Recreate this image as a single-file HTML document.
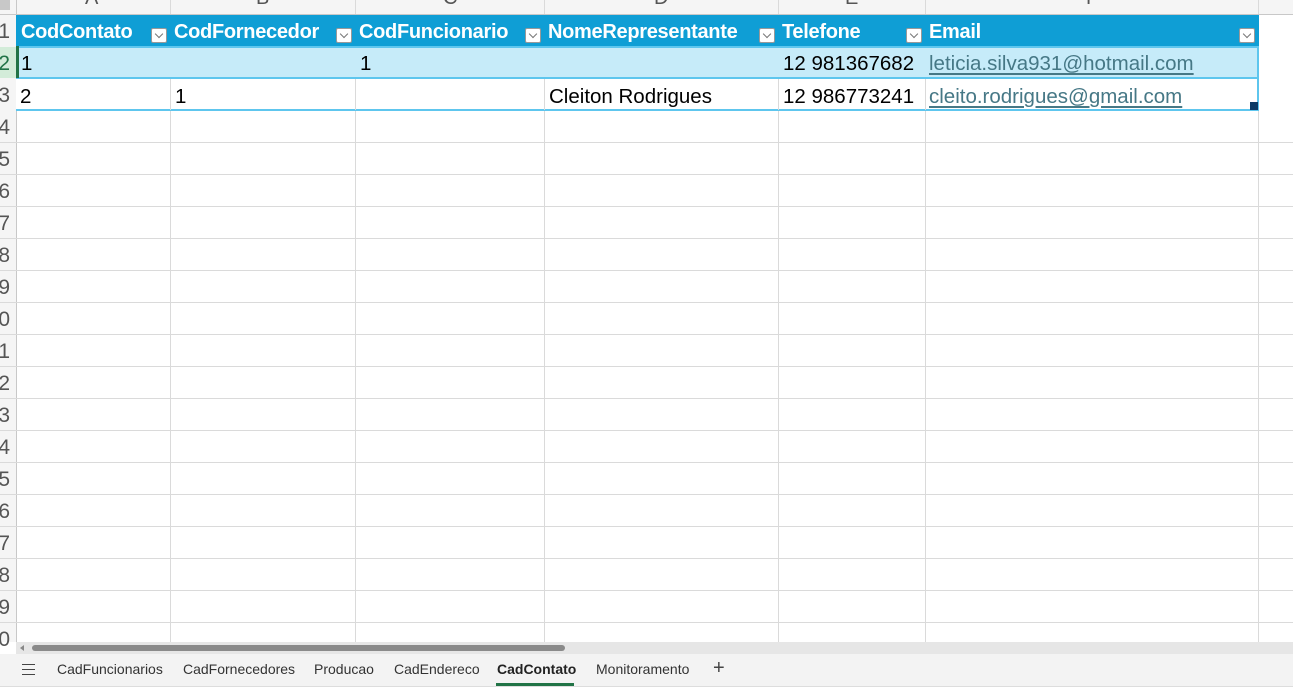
<!DOCTYPE html>
<html><head><meta charset="utf-8"><style>
*{margin:0;padding:0;box-sizing:border-box}
body{width:1293px;height:693px;overflow:hidden;background:#fff;font-family:"Liberation Sans",sans-serif;position:relative}
.a{position:absolute}
.vl{position:absolute;top:0;width:1px;background:#dadada;height:642px}
.hl{position:absolute;left:0;height:1px;background:#dadada;width:1293px}
.rn{position:absolute;left:-4px;width:14px;text-align:right;font-size:21px;color:#555;height:32px;line-height:34px}
.h{position:absolute;top:15px;height:31px;line-height:35px;color:#fff;font-weight:bold;font-size:20px;letter-spacing:-0.3px;white-space:nowrap}
.dd{position:absolute;top:28px;width:16px;height:15px;background:#fff;border:1px solid #999;border-radius:2px}
.dd:after{content:"";position:absolute;left:4px;top:2px;width:5px;height:5px;border-right:1px solid #777;border-bottom:1px solid #777;transform:rotate(45deg)}
.c{position:absolute;font-size:20.5px;color:#000;white-space:nowrap;line-height:34px}
.lnk{color:#467886;text-decoration:underline;text-underline-offset:3px}
.tab{position:absolute;top:661px;font-size:14px;color:#333;}
</style></head><body>
<div class="a" style="left:0;top:0;width:16px;height:642px;background:#f5f5f5"></div>
<div class="a" style="left:0;top:0;width:1293px;height:14px;background:#f5f5f5"></div>
<div class="a" style="left:0;top:0;width:10px;height:10px;background:#c8c8c8"></div>
<div class="vl" style="left:16px;background:#c8c8c8"></div>
<div class="vl" style="left:170px"></div><div class="vl" style="left:355px"></div><div class="vl" style="left:544px"></div><div class="vl" style="left:778px"></div><div class="vl" style="left:925px"></div><div class="vl" style="left:1258px"></div>
<div class="hl" style="top:14px;background:#c8c8c8"></div>
<div class="hl" style="top:142px"></div><div class="hl" style="top:174px"></div><div class="hl" style="top:206px"></div><div class="hl" style="top:238px"></div><div class="hl" style="top:270px"></div><div class="hl" style="top:302px"></div><div class="hl" style="top:334px"></div><div class="hl" style="top:366px"></div><div class="hl" style="top:398px"></div><div class="hl" style="top:430px"></div><div class="hl" style="top:462px"></div><div class="hl" style="top:494px"></div><div class="hl" style="top:526px"></div><div class="hl" style="top:558px"></div><div class="hl" style="top:590px"></div><div class="hl" style="top:622px"></div>
<div class="a" style="left:85px;top:-13px;font-size:20px;color:#555">A</div>
<div class="a" style="left:256px;top:-13px;font-size:20px;color:#555">B</div>
<div class="a" style="left:443px;top:-13px;font-size:20px;color:#555">C</div>
<div class="a" style="left:654px;top:-13px;font-size:20px;color:#555">D</div>
<div class="a" style="left:845px;top:-13px;font-size:20px;color:#555">E</div>
<div class="a" style="left:1086px;top:-13px;font-size:20px;color:#555">F</div>
<div class="a" style="left:0;top:47px;width:16px;height:31px;background:#d3ecd9"></div>
<div class="rn" style="top:15px">1</div><div class="rn" style="top:47px;color:#217346">2</div><div class="rn" style="top:79px">3</div><div class="rn" style="top:111px">4</div><div class="rn" style="top:143px">5</div><div class="rn" style="top:175px">6</div><div class="rn" style="top:207px">7</div><div class="rn" style="top:239px">8</div><div class="rn" style="top:271px">9</div><div class="rn" style="top:303px">0</div><div class="rn" style="top:335px">1</div><div class="rn" style="top:367px">2</div><div class="rn" style="top:399px">3</div><div class="rn" style="top:431px">4</div><div class="rn" style="top:463px">5</div><div class="rn" style="top:495px">6</div><div class="rn" style="top:527px">7</div><div class="rn" style="top:559px">8</div><div class="rn" style="top:591px">9</div><div class="rn" style="top:623px">0</div>
<!-- table -->
<div class="a" style="left:16px;top:15px;width:1243px;height:31px;background:#0f9ed5"></div>
<div class="a" style="left:16px;top:77px;width:1243px;height:34px;border-bottom:2px solid #5ec6ee;border-right:2px solid #5ec6ee;background:#fff"></div>
<div class="vl" style="left:170px;top:78px;height:32px"></div><div class="vl" style="left:355px;top:78px;height:32px"></div><div class="vl" style="left:544px;top:78px;height:32px"></div><div class="vl" style="left:778px;top:78px;height:32px"></div><div class="vl" style="left:925px;top:78px;height:32px"></div>
<div class="a" style="left:16px;top:46px;width:1243px;height:33px;background:#c6ebf9;border:2px solid #5ec6ee;border-left:none"></div>
<div class="a" style="left:16px;top:46px;width:3px;height:32px;background:#217346"></div>
<div class="a" style="left:1250px;top:102px;width:8px;height:8px;background:#0b3b66"></div>
<div class="h" style="left:21px">CodContato</div><div class="dd" style="left:151px"></div>
<div class="h" style="left:174px">CodFornecedor</div><div class="dd" style="left:336px"></div>
<div class="h" style="left:359px">CodFuncionario</div><div class="dd" style="left:525px"></div>
<div class="h" style="left:548px">NomeRepresentante</div><div class="dd" style="left:759px"></div>
<div class="h" style="left:782px">Telefone</div><div class="dd" style="left:906px"></div>
<div class="h" style="left:929px">Email</div><div class="dd" style="left:1239px"></div>
<div class="c" style="left:21px;top:47px">1</div><div class="c" style="left:360px;top:47px">1</div><div class="c" style="left:783px;top:47px">12 981367682</div><div class="c lnk" style="left:929px;top:47px">leticia.silva931@hotmail.com</div>
<div class="c" style="left:20px;top:80px">2</div><div class="c" style="left:175px;top:80px">1</div><div class="c" style="left:549px;top:80px">Cleiton Rodrigues</div><div class="c" style="left:783px;top:80px">12 986773241</div><div class="c lnk" style="left:929px;top:80px">cleito.rodrigues@gmail.com</div>
<!-- scroll -->
<div class="a" style="left:16px;top:642px;width:1277px;height:12px;background:#e6e6e6"></div>
<div class="a" style="left:20px;top:645px;width:0;height:0;border-top:3px solid transparent;border-bottom:3px solid transparent;border-right:4px solid #888"></div>
<div class="a" style="left:32px;top:645px;width:533px;height:6px;background:#8a8a8a;border-radius:3px"></div>
<div class="a" style="left:0;top:654px;width:1293px;height:33px;background:#f3f3f3;border-bottom:1px solid #ddd"></div>
<div class="a" style="left:22px;top:664px;width:13px;height:1px;background:#444;box-shadow:0 5px 0 #444,0 10px 0 #444"></div>
<div class="tab" style="left:57px">CadFuncionarios</div>
<div class="tab" style="left:183px">CadFornecedores</div>
<div class="tab" style="left:314px">Producao</div>
<div class="tab" style="left:394px">CadEndereco</div>
<div class="tab" style="left:497px;font-weight:bold;color:#222">CadContato</div>
<div class="a" style="left:496px;top:683px;width:78px;height:3px;background:#217346"></div>
<div class="tab" style="left:596px">Monitoramento</div>
<div class="tab" style="left:713px;font-size:20px;top:657px;color:#444">+</div>
</body></html>
